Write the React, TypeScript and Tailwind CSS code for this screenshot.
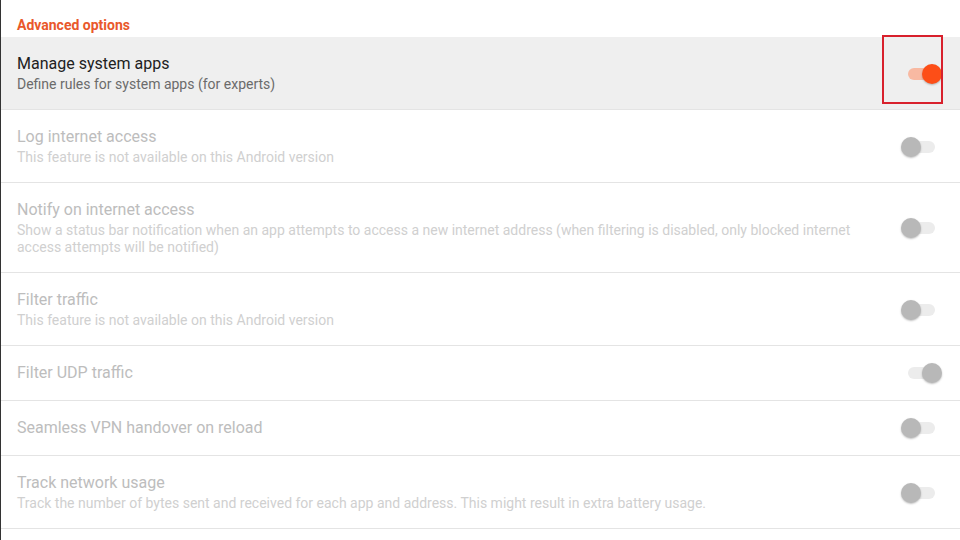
import React from "react";

type Row = {
  title: string;
  sub?: string;
  on: boolean;
  enabled: boolean;
  highlighted?: boolean;
};

const rows: Row[] = [
  { title: "Manage system apps", sub: "Define rules for system apps (for experts)", on: true, enabled: true, highlighted: true },
  { title: "Log internet access", sub: "This feature is not available on this Android version", on: false, enabled: false },
  {
    title: "Notify on internet access",
    sub: "Show a status bar notification when an app attempts to access a new internet address (when filtering is disabled, only blocked internet access attempts will be notified)",
    on: false,
    enabled: false,
  },
  { title: "Filter traffic", sub: "This feature is not available on this Android version", on: false, enabled: false },
  { title: "Filter UDP traffic", on: true, enabled: false },
  { title: "Seamless VPN handover on reload", on: false, enabled: false },
  {
    title: "Track network usage",
    sub: "Track the number of bytes sent and received for each app and address. This might result in extra battery usage.",
    on: false,
    enabled: false,
  },
];

function Switch({ on, enabled }: { on: boolean; enabled: boolean }) {
  const active = on && enabled;
  return (
    <div
      className={
        "relative flex items-center w-[41px] h-[20px] shrink-0 " + (on ? "justify-end" : "justify-start")
      }
    >
      <div className="absolute inset-x-[7px] inset-y-[4px] flex">
        <div className={"flex-1 rounded-full " + (active ? "bg-[#f8b9a2]" : "bg-[#ececec]")} />
      </div>
      <div
        className={
          "relative w-[20px] h-[20px] rounded-full shadow-[0_1px_2px_rgba(0,0,0,0.25)] " +
          (active ? "bg-[#fd4e17]" : "bg-[#b8b8b8]")
        }
      />
    </div>
  );
}

export default function App() {
  return (
    <div
      className="w-[960px] h-[540px] overflow-hidden bg-white border-l border-[#333333]"
      style={{ fontFamily: "Roboto, 'Liberation Sans', sans-serif" }}
    >
      <div className="pl-[16px] pt-[17px] pb-[4px] text-[14px] leading-[16px] font-bold text-[#e9582b]">
        Advanced options
      </div>
      {rows.map((r, i) => (
        <div
          key={i}
          className={
            "relative flex items-center border-b border-[#e4e4e4] pl-[16px] pr-[18px] pt-[17px] " +
            (r.sub ? "pb-[16px] " : "pb-[17px] ") +
            (r.highlighted ? "bg-[#efefef]" : "bg-white")
          }
        >
          <div className="flex-1 min-w-0 pr-[40px]">
            <div
              className={
                "text-[16px] leading-[20px] " + (r.enabled ? "text-[#212121]" : "text-[#bdbdbd]")
              }
            >
              {r.title}
            </div>
            {r.sub && (
              <div
                className={
                  "mt-[2px] text-[14px] leading-[17px] " +
                  (r.enabled ? "text-[#6b6b6b]" : "text-[#d0d0d0]")
                }
              >
                {r.sub}
              </div>
            )}
          </div>
          <Switch on={r.on} enabled={r.enabled} />
          {r.highlighted && (
            <div className="absolute right-[17px] top-[-2px] w-[61px] h-[69px] border-2 border-[#d8202c]" />
          )}
        </div>
      ))}
    </div>
  );
}
